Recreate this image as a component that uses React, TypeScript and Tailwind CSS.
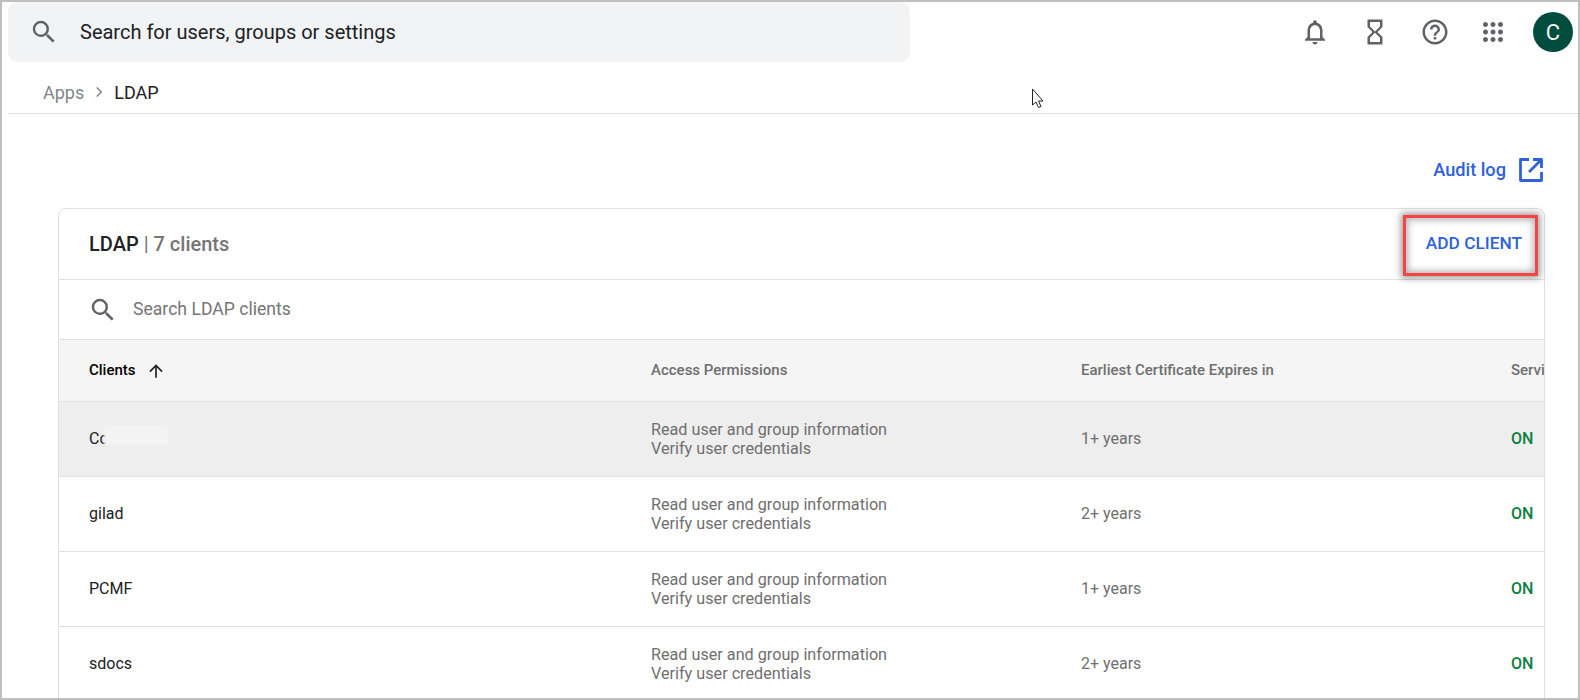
const font = { fontFamily: "Roboto, sans-serif" };

function Row({ name, years, selected, patch }: { name: string; years: string; selected?: boolean; patch?: boolean }) {
  return (
    <div className={`grid grid-cols-[562px_430px_430px_1fr] h-[75px] items-center border-b border-[#e0e0e0] pl-[30px] ${selected ? "bg-[#eeeeee]" : "bg-white"}`}>
      <div className="relative text-[16px] text-[#202124]">
        {name}
        {patch && <span className="absolute left-[15px] top-[-2px] w-[64px] h-[20px] bg-[#f3f3f3] blur-[1px]" />}
      </div>
      <div className="text-[16.2px] leading-[19px] text-[#6f6f6f]">
        <div>Read user and group information</div>
        <div>Verify user credentials</div>
      </div>
      <div className="text-[16px] text-[#6f6f6f]">{years}</div>
      <div className="text-[16px] font-medium text-[#0b8043]">ON</div>
    </div>
  );
}

function SearchIcon({ size, color }: { size: number; color: string }) {
  return (
    <svg width={size} height={size} viewBox="0 0 24 24" fill={color}>
      <path d="M15.5 14h-.79l-.28-.27A6.47 6.47 0 0 0 16 9.5 6.5 6.5 0 1 0 9.5 16c1.61 0 3.09-.59 4.23-1.57l.27.28v.79l5 4.99L20.49 19l-4.99-5zm-6 0C7.01 14 5 11.99 5 9.5S7.01 5 9.5 5 14 7.01 14 9.5 11.99 14 9.5 14z" />
    </svg>
  );
}

export default function App() {
  return (
    <div style={font} className="w-[1580px] h-[700px] overflow-hidden border-2 border-[#bfbfbf] bg-white relative">
      <div className="flex items-center h-[60px] pl-[6px] pr-[5px]">
        <div className="w-[902px] h-[60px] rounded-[10px] bg-[#f1f3f4] flex items-center pl-[21px]">
          <SearchIcon size={30} color="#5f6368" />
          <span className="ml-[21px] text-[20px] text-[#202124]">Search for users, groups or settings</span>
        </div>
        <div className="ml-auto flex items-center">
          <svg width="30" height="30" viewBox="0 0 24 24" fill="#5f6368">
            <path d="M12 22c1.1 0 2-.9 2-2h-4c0 1.1.9 2 2 2zm6-6v-5c0-3.07-1.63-5.64-4.5-6.32V4c0-.83-.67-1.5-1.5-1.5s-1.5.67-1.5 1.5v.68C7.64 5.36 6 7.92 6 11v5l-2 2v1h16v-1l-2-2zm-2 1H8v-6c0-2.48 1.51-4.5 4-4.5s4 2.02 4 4.5v6z" />
          </svg>
          <svg className="ml-[30px]" width="30" height="30" viewBox="0 0 24 24" fill="#5f6368">
            <path d="M6 2v6h.01L6 8.01 10 12l-4 4 .01.01H6V22h12v-5.99h-.01L18 16l-4-4 4-3.99-.01-.01H18V2H6zm10 14.5V20H8v-3.5l4-4 4 4zm-4-5l-4-4V4h8v3.5l-4 4z" />
          </svg>
          <svg className="ml-[30px]" width="30" height="30" viewBox="0 0 24 24" fill="#5f6368">
            <path d="M11 18h2v-2h-2v2zm1-16C6.48 2 2 6.48 2 12s4.48 10 10 10 10-4.48 10-10S17.52 2 12 2zm0 18c-4.41 0-8-3.59-8-8s3.59-8 8-8 8 3.59 8 8-3.59 8-8 8zm0-14c-2.21 0-4 1.79-4 4h2c0-1.1.9-2 2-2s2 .9 2 2c0 2-3 1.75-3 5h2c0-2.25 3-2.5 3-5 0-2.21-1.79-4-4-4z" />
          </svg>
          <svg className="ml-[28px]" width="30" height="30" viewBox="0 0 24 24" fill="#5f6368">
            <path d="M6 8c1.1 0 2-.9 2-2s-.9-2-2-2-2 .9-2 2 .9 2 2 2zm6 12c1.1 0 2-.9 2-2s-.9-2-2-2-2 .9-2 2 .9 2 2 2zm-6 0c1.1 0 2-.9 2-2s-.9-2-2-2-2 .9-2 2 .9 2 2 2zm0-6c1.1 0 2-.9 2-2s-.9-2-2-2-2 .9-2 2 .9 2 2 2zm6 0c1.1 0 2-.9 2-2s-.9-2-2-2-2 .9-2 2 .9 2 2 2zm4-8c0 1.1.9 2 2 2s2-.9 2-2-.9-2-2-2-2 .9-2 2zm-4 2c1.1 0 2-.9 2-2s-.9-2-2-2-2 .9-2 2 .9 2 2 2zm6 6c1.1 0 2-.9 2-2s-.9-2-2-2-2 .9-2 2 .9 2 2 2zm0 6c1.1 0 2-.9 2-2s-.9-2-2-2-2 .9-2 2 .9 2 2 2z" />
          </svg>
          <div className="ml-[25px] w-[40px] h-[40px] rounded-full bg-[#004d40] text-[#f4f4f4] text-[22px] flex items-center justify-center">C</div>
        </div>
      </div>

      <div className="ml-[6px] h-[52px] border-b border-[#e0e0e0] flex items-center pl-[35px] pt-[9px] text-[18px]">
        <span className="text-[#80868b]">Apps</span>
        <svg className="mx-[6px]" width="18" height="18" viewBox="0 0 24 24" fill="none" stroke="#80868b" strokeWidth="2">
          <path d="M9 6l6 6-6 6" />
        </svg>
        <span className="text-[#202124]">LDAP</span>
      </div>

      <div className="flex justify-end items-center h-[94px] pr-[34px] pt-[18px] text-[#2f62d9]">
        <span className="text-[18.2px] font-medium">Audit log</span>
        <svg className="ml-[12px]" width="26" height="26" viewBox="0 0 26 26" fill="none" stroke="#2f62d9" strokeWidth="2.8" strokeLinejoin="round">
          <path d="M11 2.5H2.5v21h21V15" />
          <path d="M15 2.5h8.5V11M23 3L11 15" />
        </svg>
      </div>

      <div className="ml-[56px] w-[1487px] rounded-t-[8px] border border-[#e0e0e0]">
        <div className="h-[71px] flex items-center justify-between pl-[30px] pr-[22px] border-b border-[#e0e0e0]">
          <div className="text-[20px] font-medium text-[#757575]">
            <span className="text-[#202124]">LDAP</span> <span className="font-normal">|</span> 7 clients
          </div>
          <div className="text-[17.3px] font-medium text-[#2f62d9]">ADD CLIENT</div>
        </div>
        <div className="h-[60px] flex items-center pl-[29px] border-b border-[#e0e0e0]">
          <SearchIcon size={30} color="#5f6368" />
          <span className="ml-[15px] text-[17.6px] text-[#757575]">Search LDAP clients</span>
        </div>
        <div className="grid grid-cols-[562px_430px_430px_1fr] h-[62px] items-center bg-[#f5f5f5] border-b border-[#e0e0e0] pl-[30px] text-[15px] font-medium text-[#6f6f6f] whitespace-nowrap overflow-hidden">
          <div className="flex items-center text-black">
            Clients
            <svg className="ml-[10px]" width="20" height="20" viewBox="0 0 24 24" fill="#202124">
              <path d="M4 12l1.41 1.41L11 7.83V20h2V7.83l5.58 5.59L20 12l-8-8-8 8z" />
            </svg>
          </div>
          <div>Access Permissions</div>
          <div>Earliest Certificate Expires in</div>
          <div className="overflow-hidden w-[33px]">Service status</div>
        </div>
        <Row name="Cc" years="1+ years" selected patch />
        <Row name="gilad" years="2+ years" />
        <Row name="PCMF" years="1+ years" />
        <Row name="sdocs" years="2+ years" />
      </div>

      <div className="absolute left-[1401px] top-[213px] w-[135px] h-[61px] border-[3px] border-[#f44444] shadow-[0_0_7px_2px_rgba(0,0,0,0.4),inset_0_0_7px_2px_rgba(0,0,0,0.3)]" />

      <svg className="absolute left-[1029px] top-[86px]" width="14" height="21" viewBox="0 0 14 21" fill="white" stroke="#222" strokeWidth="1">
        <path d="M1.5 1v16l3.5-3 2.5 5.5 2.5-1-2.5-5.5h4.5z" />
      </svg>
    </div>
  );
}
